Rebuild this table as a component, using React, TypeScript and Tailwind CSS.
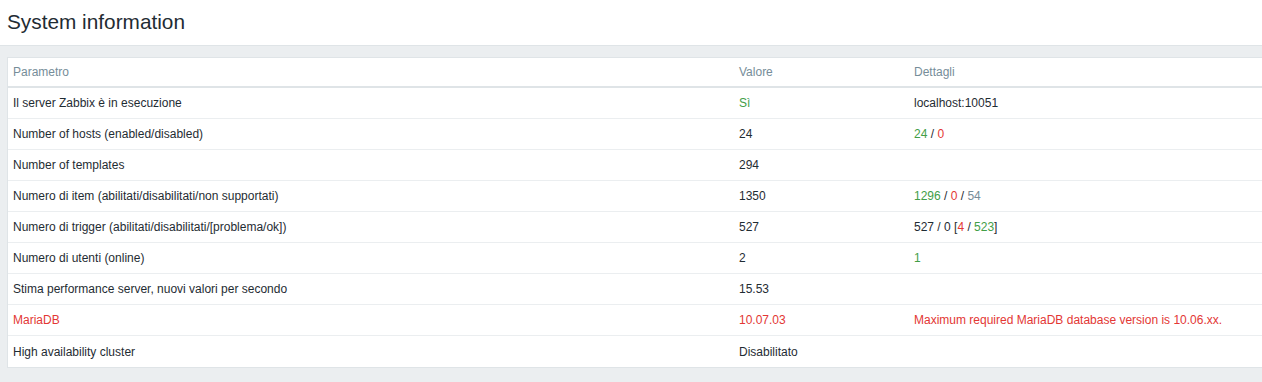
import React from "react";

const G = "text-[#429e47]";
const R = "text-[#e33734]";
const GR = "text-[#768d99]";

type Row = { p: React.ReactNode; v: React.ReactNode; d: React.ReactNode };

const rows: Row[] = [
  { p: "Il server Zabbix è in esecuzione", v: <span className={G}>Sì</span>, d: "localhost:10051" },
  {
    p: "Number of hosts (enabled/disabled)",
    v: "24",
    d: (
      <>
        <span className={G}>24</span> / <span className={R}>0</span>
      </>
    ),
  },
  { p: "Number of templates", v: "294", d: "" },
  {
    p: "Numero di item (abilitati/disabilitati/non supportati)",
    v: "1350",
    d: (
      <>
        <span className={G}>1296</span> / <span className={R}>0</span> / <span className={GR}>54</span>
      </>
    ),
  },
  {
    p: "Numero di trigger (abilitati/disabilitati/[problema/ok])",
    v: "527",
    d: (
      <>
        527 / 0 [<span className={R}>4</span> / <span className={G}>523</span>]
      </>
    ),
  },
  { p: "Numero di utenti (online)", v: "2", d: <span className={G}>1</span> },
  { p: "Stima performance server, nuovi valori per secondo", v: "15.53", d: "" },
  {
    p: <span className={R}>MariaDB</span>,
    v: <span className={R}>10.07.03</span>,
    d: <span className={R}>Maximum required MariaDB database version is 10.06.xx.</span>,
  },
  { p: "High availability cluster", v: "Disabilitato", d: "" },
];

export default function App() {
  return (
    <div
      className="w-[1262px] h-[382px] overflow-hidden bg-[#ebeef0] text-[#1f2c33] text-[12px]"
      style={{ fontFamily: '"Liberation Sans", Arial, sans-serif' }}
    >
      <div className="h-[46px] bg-white border-b border-[#dfe4e7] pl-[7px] flex items-center">
        <h1 className="text-[20.8px] leading-none text-[#1f2c33]">System information</h1>
      </div>
      <div className="pl-[7px] pt-[11px]">
        <div className="w-[1300px] bg-white border border-[#dfe4e7]">
          <div className="flex h-[30px] items-center border-b-2 border-[#dfe4e7] text-[#768d99]">
            <div className="w-[726px] pl-[5px]">Parametro</div>
            <div className="w-[175px] pl-[5px]">Valore</div>
            <div className="flex-1 pl-[5px]">Dettagli</div>
          </div>
          {rows.map((r, i) => (
            <div
              key={i}
              className={`flex h-[31px] items-center ${i < rows.length - 1 ? "border-b border-[#ebeef0]" : ""}`}
            >
              <div className="w-[726px] pl-[5px]">{r.p}</div>
              <div className="w-[175px] pl-[5px]">{r.v}</div>
              <div className="flex-1 pl-[5px]">{r.d}</div>
            </div>
          ))}
        </div>
      </div>
    </div>
  );
}
